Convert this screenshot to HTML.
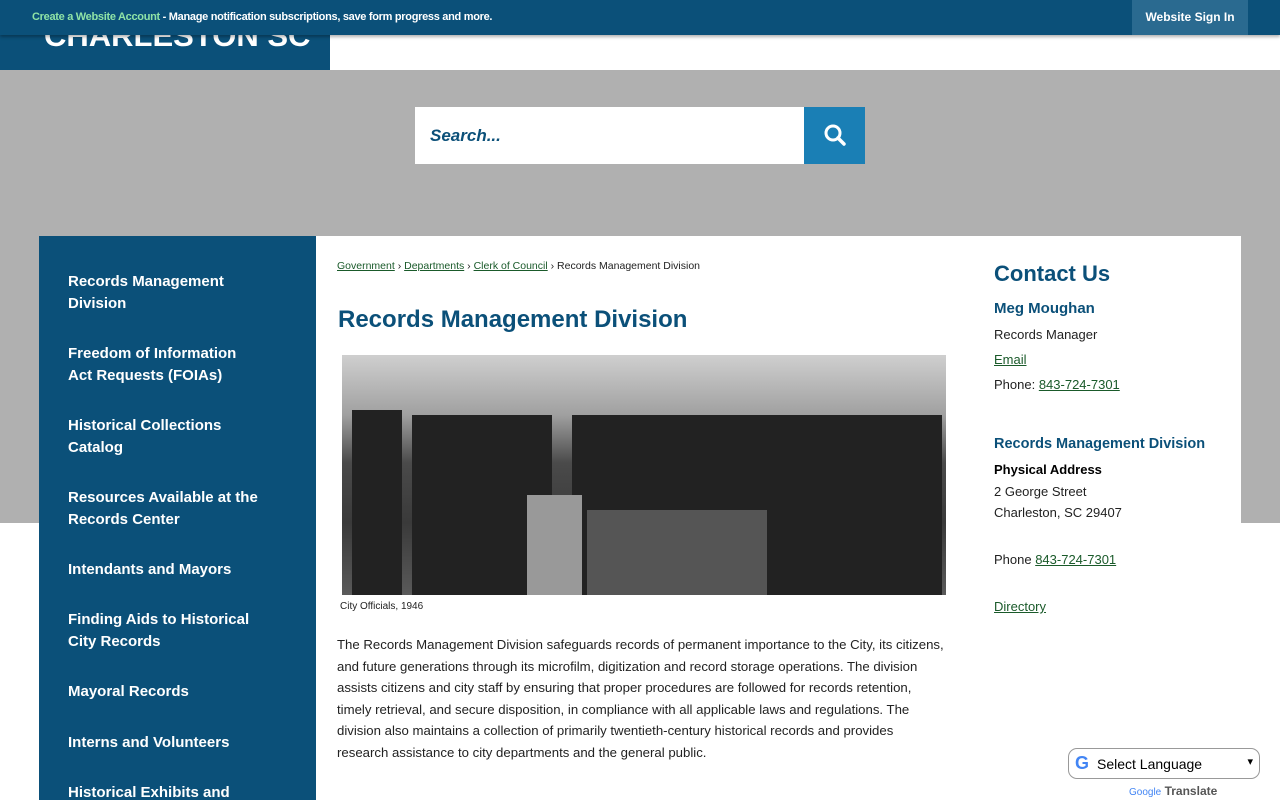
<!DOCTYPE html>
<html><head><meta charset="utf-8"><style>
*{margin:0;padding:0;box-sizing:border-box}
html,body{width:1280px;height:800px;overflow:hidden}
body{font-family:"Liberation Sans",sans-serif;background:#fff;position:relative}
.top{position:absolute;left:0;top:0;width:1280px;height:35px;background:#0b5079;z-index:3;box-shadow:0 2px 3px rgba(0,0,0,.3)}
.top .msg{position:absolute;left:32px;top:11px;font-size:11px;font-weight:bold;color:#fff;letter-spacing:-.3px}
.top .msg b{color:#8fe3a6}
.signin{position:absolute;left:1132px;top:0;width:116px;height:35px;background:#2a6a90;color:#fff;font-size:12px;font-weight:bold;text-align:center;line-height:35px}
.logo{position:absolute;left:0;top:0;width:330px;height:70px;background:#0b5079;z-index:2;overflow:hidden}
.logo span{position:absolute;left:44px;top:18px;font-size:31px;font-weight:bold;color:#fff;white-space:nowrap}
.gray{position:absolute;left:0;top:70px;width:1280px;height:453px;background:#b0b0b0}
.search{position:absolute;left:415px;top:107px;width:389px;height:57px;background:#fff;font-size:17px;font-style:italic;font-weight:bold;color:#0b5079;padding:19px 15px}
.sbtn{position:absolute;left:804px;top:107px;width:61px;height:57px;background:#1a7fb5}
.card{position:absolute;left:39px;top:236px;width:1202px;height:564px;background:#fff}
.side{position:absolute;left:39px;top:236px;width:277px;height:564px;background:#0b5079;overflow:hidden}
.side div{position:absolute;left:29px;color:#fff;font-size:15px;font-weight:bold;line-height:22px}
.bc{position:absolute;left:337px;top:260px;font-size:10.5px;color:#222}
.bc a{color:#1a5a2a;text-decoration:underline}
h1{position:absolute;left:338px;top:306px;font-size:24px;color:#0b5079}
.photo{position:absolute;left:342px;top:355px;width:604px;height:240px;background:linear-gradient(#cfcfcf,#a0a0a0 25%,#4a4a4a 45%,#3a3a3a 70%,#5a5a5a 100%);overflow:hidden}
.cap{position:absolute;left:340px;top:601px;font-size:10px;color:#222}
.body{position:absolute;left:337px;top:634px;width:608px;font-size:13.2px;line-height:21.6px;color:#222}
.right{position:absolute;left:994px;font-size:13px;color:#222}
.right a{color:#1a5a2a;text-decoration:underline}
.gt{position:absolute;left:1068px;top:748px;width:192px;height:31px;border:1px solid #999;border-radius:9px;background:#fff;font-size:14px;padding:7px 0 0 28px}
</style></head><body>
<div class="top"><div class="msg"><b>Create a Website Account</b> - Manage notification subscriptions, save form progress and more.</div><div class="signin">Website Sign In</div></div>
<div class="logo"><span>CHARLESTON SC</span></div>
<div class="gray"></div>
<div class="search">Search...</div>
<div class="sbtn"><svg width="61" height="57"><circle cx="29" cy="26" r="7" fill="none" stroke="#fff" stroke-width="3"/><path d="M34 31l6 6" stroke="#fff" stroke-width="3.5" stroke-linecap="round"/></svg></div>
<div class="card"></div>
<div class="side">
<div style="top:35px">Records Management<br>Division</div>
<div style="top:107px">Freedom of Information<br>Act Requests (FOIAs)</div>
<div style="top:179px">Historical Collections<br>Catalog</div>
<div style="top:251px">Resources Available at the<br>Records Center</div>
<div style="top:323px">Intendants and Mayors</div>
<div style="top:373px">Finding Aids to Historical<br>City Records</div>
<div style="top:445px">Mayoral Records</div>
<div style="top:496px">Interns and Volunteers</div>
<div style="top:546px">Historical Exhibits and</div>
</div>
<div class="bc"><a>Government</a> › <a>Departments</a> › <a>Clerk of Council</a> › Records Management Division</div>
<h1>Records Management Division</h1>
<div class="photo"><svg width="604" height="240"><g fill="#222"><rect x="10" y="55" width="50" height="185"/><rect x="70" y="60" width="140" height="180"/><rect x="230" y="60" width="370" height="180"/></g><rect x="245" y="155" width="180" height="85" fill="#555"/><rect x="185" y="140" width="55" height="100" fill="#999"/></svg></div>
<div class="cap">City Officials, 1946</div>
<div class="body">The Records Management Division safeguards records of permanent importance to the City, its citizens, and future generations through its microfilm, digitization and record storage operations. The division assists citizens and city staff by ensuring that proper procedures are followed for records retention, timely retrieval, and secure disposition, in compliance with all applicable laws and regulations. The division also maintains a collection of primarily twentieth-century historical records and provides research assistance to city departments and the general public.</div>
<div class="right" style="top:261px;font-size:22px;font-weight:bold;color:#0b5079">Contact Us</div>
<div class="right" style="top:300px;font-size:15px;font-weight:bold;color:#0b5079">Meg Moughan</div>
<div class="right" style="top:327px">Records Manager</div>
<div class="right" style="top:352px"><a>Email</a></div>
<div class="right" style="top:377px">Phone: <a>843-724-7301</a></div>
<div class="right" style="top:436px;font-size:14.5px;font-weight:bold;color:#0b5079">Records Management Division</div>
<div class="right" style="top:462px;font-weight:bold;color:#000">Physical Address</div>
<div class="right" style="top:484px">2 George Street</div>
<div class="right" style="top:505px">Charleston, SC 29407</div>
<div class="right" style="top:552px">Phone <a>843-724-7301</a></div>
<div class="right" style="top:599px"><a>Directory</a></div>
<div class="gt">Select Language<span style="position:absolute;left:6px;top:4px;font-size:18px;font-weight:bold;color:#4285f4">G</span><span style="position:absolute;right:6px;top:6px;font-size:11px">▾</span></div>
<div style="position:absolute;left:1129px;top:784px;font-size:12px;color:#555"><span style="font-size:10px;color:#4285f4">Google</span> <b>Translate</b></div>
</body></html>
